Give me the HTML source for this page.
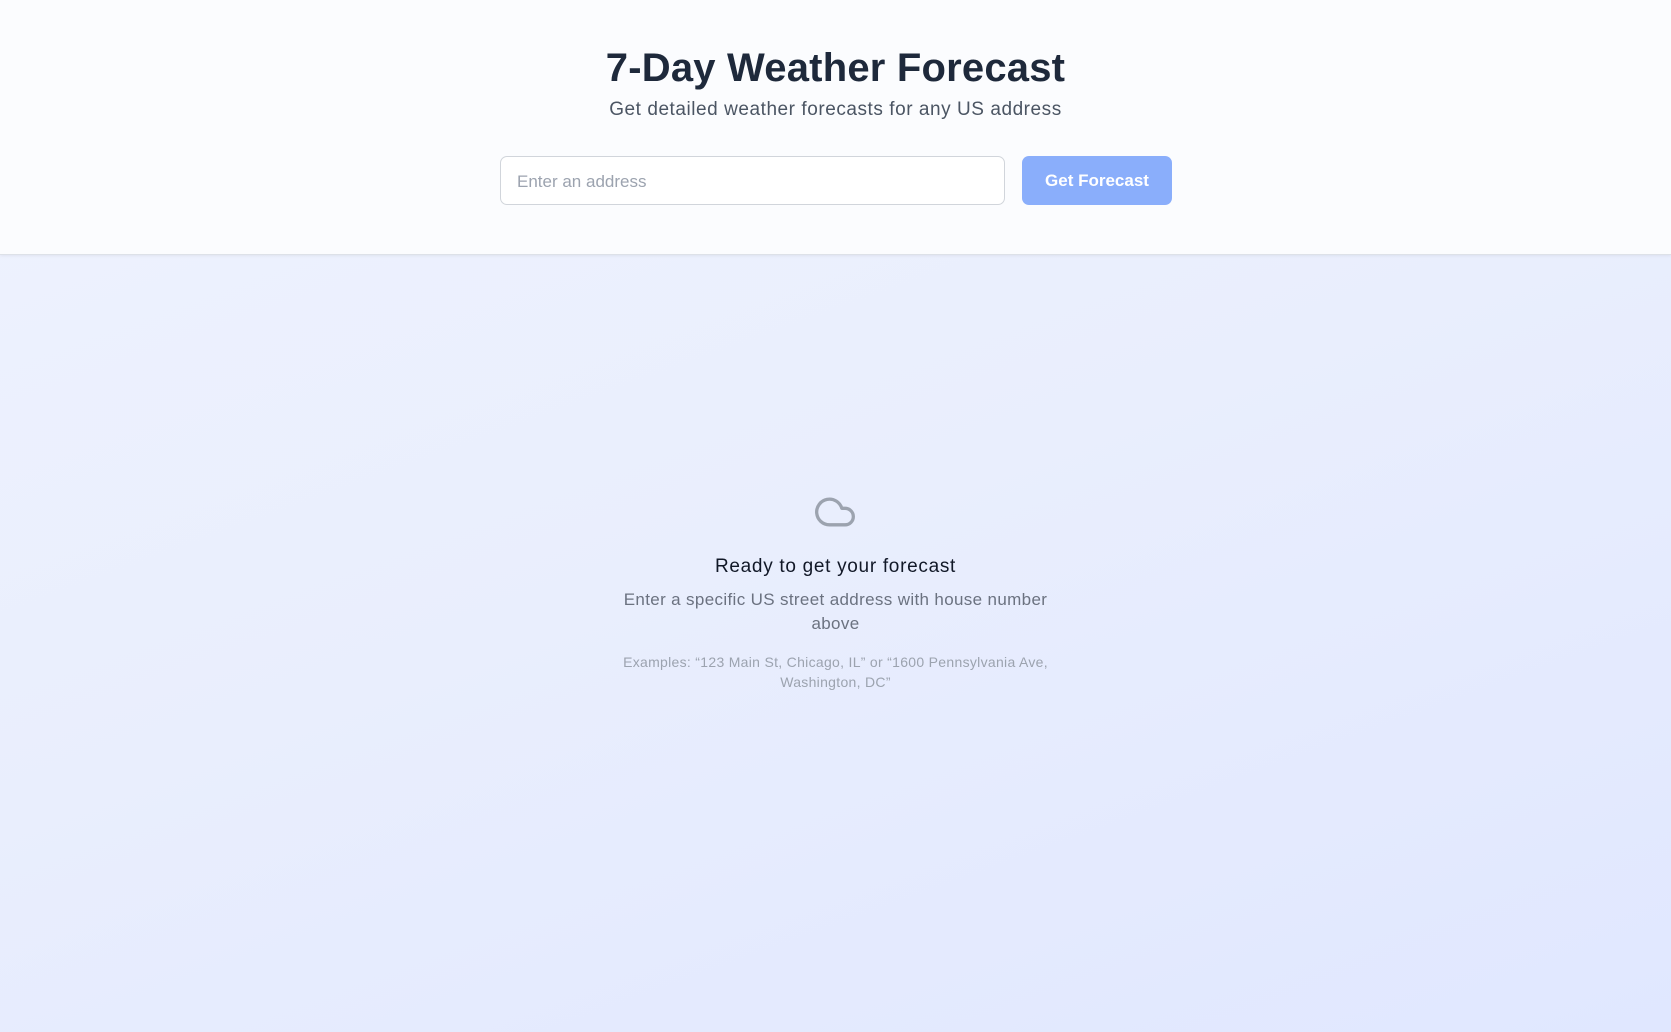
<!DOCTYPE html>
<html><head><meta charset="utf-8"><style>
*{margin:0;padding:0;box-sizing:border-box}
html,body{width:1671px;height:1032px;overflow:hidden}
body{font-family:"Liberation Sans",sans-serif;background:linear-gradient(160deg,#eff3fe 0%,#e9eefd 50%,#e0e7ff 100%);position:relative}
header{position:absolute;left:0;top:0;width:1671px;height:255px;background:#fbfcfe;border-bottom:1px solid #dde1e8;box-shadow:0 1px 3px rgba(0,0,0,.06)}
h1{position:absolute;left:0;width:100%;top:46px;text-align:center;font-size:40px;font-weight:bold;color:#1e293b;letter-spacing:0.2px}
.sub{position:absolute;left:0;width:100%;top:99px;text-align:center;font-size:19px;color:#4b5563;letter-spacing:0.55px}
.inp{position:absolute;left:500px;top:156px;width:505px;height:49px;background:#fff;border:1px solid #d1d5db;border-radius:7px;font-size:17px;color:#9ca3af;padding:15px 0 0 16px}
.btn{position:absolute;left:1022px;top:156px;width:150px;height:49px;background:#8aaefb;border-radius:7px;color:#fff;font-size:17px;font-weight:bold;text-align:center;line-height:49px}
.c{position:absolute;left:0;width:100%;text-align:center}
</style></head><body>
<header>
<h1>7-Day Weather Forecast</h1>
<div class="sub">Get detailed weather forecasts for any US address</div>
<div class="inp">Enter an address</div>
<div class="btn">Get Forecast</div>
</header>
<svg style="position:absolute;left:811px;top:490px" width="48" height="44" viewBox="0 0 24 24" fill="none" stroke="#9ca3af" stroke-width="1.8" stroke-linecap="round" stroke-linejoin="round"><path d="M17.5 19H9a7 7 0 1 1 6.71-9h1.79a4.5 4.5 0 1 1 0 9Z"/></svg>
<div class="c" style="top:556px;font-size:19px;color:#111827;letter-spacing:0.7px">Ready to get your forecast</div>
<div class="c" style="top:588px;font-size:17px;line-height:24px;color:#6b7280;letter-spacing:0.35px"><div style="width:460px;margin:0 auto">Enter a specific US street address with house number above</div></div>
<div class="c" style="top:652px;font-size:14px;line-height:20px;color:#9ca3af;letter-spacing:0.3px"><div style="width:450px;margin:0 auto">Examples: “123 Main St, Chicago, IL” or “1600 Pennsylvania Ave, Washington, DC”</div></div>
</body></html>
